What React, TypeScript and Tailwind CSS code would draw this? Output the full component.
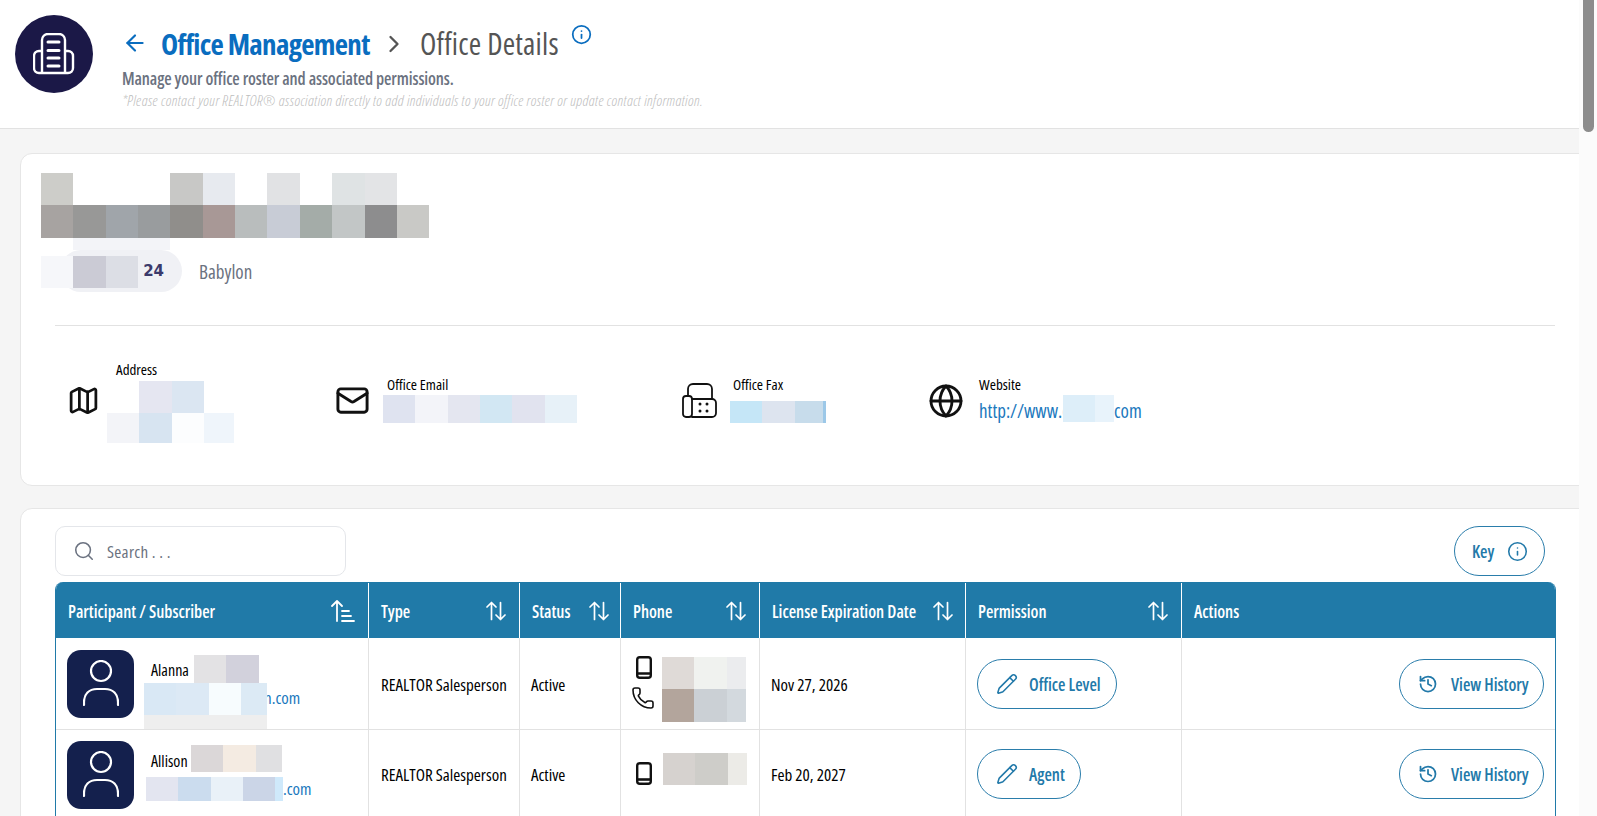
import { ArrowLeft, ChevronRight, Globe, History, Info, Mail, Map as MapIcon, Pencil, Phone, Search } from 'lucide-react';

function Cells({ cells, className }: { cells: string[]; className: string }) {
  return (
    <div className={`flex ${className}`}>
      {cells.map((c, i) => (
        <div key={i} className={c} />
      ))}
    </div>
  );
}

function BuildingIcon() {
  return (
    <svg width="42" height="42" viewBox="0 0 42 42" fill="none" stroke="white" strokeWidth="2.4" strokeLinejoin="round">
      <path d="M9 40V7a6 6 0 0 1 6-6h11a6 6 0 0 1 6 6v33" />
      <path d="M9 18H6a5 5 0 0 0-5 5v12a5 5 0 0 0 5 5h29a5 5 0 0 0 5-5V23a5 5 0 0 0-5-5h-3" />
      <path d="M15 9h11M15 17.5h11M15 25h11M15 33h11" strokeWidth="3" strokeLinecap="round" />
    </svg>
  );
}

function FaxIcon() {
  return (
    <svg width="35" height="35" viewBox="0 0 35 35" fill="none" stroke="#111" strokeWidth="1.8" strokeLinecap="round" strokeLinejoin="round" className="mt-[-4px] shrink-0">
      <rect x="1" y="13" width="9" height="21" rx="3" />
      <path d="M10 16h20a4 4 0 0 1 4 4v10a4 4 0 0 1-4 4H10" />
      <path d="M6 13V6a5 5 0 0 1 5-5h14a5 5 0 0 1 5 5v10" />
      <g fill="#111" stroke="none">
        <circle cx="18" cy="21" r="1.5" />
        <circle cx="25" cy="21" r="1.5" />
        <circle cx="18" cy="28" r="1.5" />
        <circle cx="25" cy="28" r="1.5" />
      </g>
    </svg>
  );
}

function MobileIcon() {
  return (
    <svg width="16" height="23" viewBox="0 0 16 23" fill="none" className="shrink-0">
      <rect x="1.2" y="1.2" width="13.6" height="20.6" rx="2.6" stroke="#111" strokeWidth="2.4" />
      <path d="M1.5 17.5h13" stroke="#111" strokeWidth="2.6" />
      <path d="M6.5 19.6h3" stroke="white" strokeWidth="1" />
    </svg>
  );
}

function SortBoth() {
  return (
    <svg width="20" height="20" viewBox="0 0 20 20" fill="none" stroke="white" strokeWidth="1.7" strokeLinecap="round" strokeLinejoin="round">
      <path d="M5.5 18.5V1.5M1 6l4.5-4.5L10 6" />
      <path d="M14.5 1.5v17M10 14l4.5 4.5L19 14" />
    </svg>
  );
}

function SortAsc() {
  return (
    <svg width="24" height="22" viewBox="0 0 24 22" fill="none" stroke="white" strokeWidth="1.8" strokeLinecap="round" strokeLinejoin="round">
      <path d="M6 21V1M1 6l5-5 5 5" />
      <path d="M11 11h7M11 16h9M11 21h12" />
    </svg>
  );
}

function PersonIcon() {
  return (
    <svg width="36" height="48" viewBox="0 0 36 48" fill="none" stroke="white" strokeWidth="2.2" strokeLinecap="round">
      <circle cx="18" cy="11" r="10" />
      <path d="M1 45v-3c0-8 5-13 13-13h8c8 0 13 5 13 13v3" />
    </svg>
  );
}

function Avatar() {
  return (
    <div className="w-[67px] h-[68px] rounded-[14px] bg-[#14204d] flex items-center justify-center shrink-0">
      <PersonIcon />
    </div>
  );
}

function HeadCell({ label, sort, border = true, className = '' }: { label: string; sort?: 'asc' | 'both'; border?: boolean; className?: string }) {
  return (
    <div className={`flex items-center justify-between pl-[12px] text-white text-[17px] font-semibold ${border ? 'border-r border-white' : ''} ${className}`}>
      <span className="whitespace-nowrap pt-[2px]">{label}</span>
      {sort === 'asc' ? <SortAsc /> : sort === 'both' ? <SortBoth /> : null}
    </div>
  );
}

function PillButton({ icon, label, className }: { icon: React.ReactNode; label: string; className: string }) {
  return (
    <button className={`flex items-center h-[50px] rounded-full border border-[#2a7dab] bg-white text-[#2279a9] text-[17px] font-semibold ${className}`}>
      {icon}
      <span className="whitespace-nowrap pt-[2px]">{label}</span>
    </button>
  );
}

function Cell({ children, className = '' }: { children: React.ReactNode; className?: string }) {
  return <div className={`border-r border-[#e2e2e2] ${className}`}>{children}</div>;
}

export default function App() {
  return (
    <div className="flex h-[816px] overflow-hidden bg-white font-['Open_Sans',sans-serif] [font-stretch:75%] text-black">
      <main className="flex-1 min-w-0 overflow-hidden bg-[#f5f5f5]">
        <header className="h-[129px] bg-white border-b border-[#e2e2e2] flex pl-[15px] pt-[15px]">
          <div className="w-[78px] h-[78px] rounded-full bg-[#1b1847] flex items-center justify-center shrink-0">
            <BuildingIcon />
          </div>
          <div className="ml-[29px] pt-[9px]">
            <div className="flex items-start h-[40px]">
              <ArrowLeft className="mt-[6px] text-[#0a6dbf] shrink-0" size={26} strokeWidth={2} />
              <span className="ml-[13px] w-[209px] text-[29px] leading-[40px] font-bold tracking-[-0.7px] text-[#0a6dbf] whitespace-nowrap">Office Management</span>
              <ChevronRight className="ml-[10px] mt-[6px] text-[#555] shrink-0" size={28} strokeWidth={2} />
              <span className="ml-[12px] text-[30px] leading-[40px] tracking-[0.2px] text-[#555] whitespace-nowrap">Office Details</span>
              <Info className="ml-[12px] text-[#0a6dbf] shrink-0" size={21} strokeWidth={2} />
            </div>
            <p className="mt-[3px] text-[17px] leading-[24px] font-semibold tracking-[-0.1px] text-[#6b7280] whitespace-nowrap">Manage your office roster and associated permissions.</p>
            <p className="mt-[-2px] text-[15px] leading-[22px] font-light italic tracking-[0.35px] text-[#bdbdbd] whitespace-nowrap">*Please contact your REALTOR® association directly to add individuals to your office roster or update contact information.</p>
          </div>
        </header>

        <div className="pl-[20px] pt-[24px]">
          <section className="h-[333px] mr-[-12px] bg-white rounded-[12px] border border-[#e6e6e6] pt-[19px] pl-[20px] pr-[35px]">
            <Cells
              className="h-[32px]"
              cells={['w-[32px] bg-[#cdcdc9]', 'w-[33px]', 'w-[32px]', 'w-[32px]', 'w-[33px] bg-[#c8c8c6]', 'w-[32px] bg-[#e7eaef]', 'w-[32px]', 'w-[33px] bg-[#e1e2e4]', 'w-[32px]', 'w-[33px] bg-[#dfe3e4]', 'w-[32px] bg-[#e3e4e6]']}
            />
            <Cells
              className="h-[33px]"
              cells={['w-[32px] bg-[#a7a3a1]', 'w-[33px] bg-[#989897]', 'w-[32px] bg-[#a0a5aa]', 'w-[32px] bg-[#999c9e]', 'w-[33px] bg-[#908e8b]', 'w-[32px] bg-[#a89896]', 'w-[32px] bg-[#b9bdbd]', 'w-[33px] bg-[#c8ccd6]', 'w-[32px] bg-[#a4aca8]', 'w-[33px] bg-[#c2c6c6]', 'w-[32px] bg-[#8d8d8e]', 'w-[32px] bg-[#c9c9c6]']}
            />
            <div className="flex items-center h-[42px] mt-[12px]">
              <div className="relative w-[122px] h-[42px] ml-[19px] rounded-full bg-[#f0f1f5] flex items-center justify-end pr-[18px] text-[15px] font-bold font-['DejaVu_Sans',sans-serif] [font-stretch:100%] text-[#3b3a6b]">
                24
                <div className="absolute left-[13px] top-[-12px] w-[97px] h-[12px] bg-[#f3f4f8]" />
                <Cells
                  className="absolute left-[-19px] top-[6px] h-[32px]"
                  cells={['w-[32px] bg-[#f6f7fa]', 'w-[33px] bg-[#cbcbd5]', 'w-[32px] bg-[#dcdee5]']}
                />
              </div>
              <span className="ml-[17px] pt-[2px] text-[19px] font-medium text-[#6b7280]">Babylon</span>
            </div>
            <div className="h-px bg-[#e2e2e2] ml-[14px] mt-[33px]" />
            <div className="flex items-center ml-[28px] mt-[34px] h-[85px]">
              <div className="flex items-center w-[268px]">
                <MapIcon className="w-[33px] h-[33px] mt-[-4px] mr-[7px] ml-[-2px] shrink-0 text-[#111]" strokeWidth={2} />
                <div>
                  <div className="ml-[9px] text-[15px] leading-[12px] mb-[6px]">Address</div>
                  <Cells className="h-[32px]" cells={['w-[32px]', 'w-[33px] bg-[#e5e6f1]', 'w-[32px] bg-[#dbe6f2]']} />
                  <Cells className="h-[30px]" cells={['w-[32px] bg-[#f3f4f8]', 'w-[33px] bg-[#d7e4f1]', 'w-[32px] bg-[#fcfdfe]', 'w-[30px] bg-[#eff5fb]']} />
                </div>
              </div>
              <div className="flex items-center w-[345px]">
                <Mail className="w-[35px] h-[35px] mt-[-4px] mr-[13px] ml-[-2px] shrink-0 text-[#111]" strokeWidth={2} />
                <div className="mt-[-6px]">
                  <div className="ml-[4px] text-[15px] leading-[14px] mb-[4px]">Office Email</div>
                  <Cells className="h-[28px]" cells={['w-[32px] bg-[#dfe3f0]', 'w-[33px] bg-[#f3f4f9]', 'w-[32px] bg-[#e4e6f0]', 'w-[32px] bg-[#d2e7f3]', 'w-[33px] bg-[#e1e3ef]', 'w-[32px] bg-[#e7f1f8]']} />
                </div>
              </div>
              <div className="flex items-center w-[248px]">
                <FaxIcon />
                <div className="ml-[13px] mt-[-6px]">
                  <div className="ml-[3px] text-[15px] leading-[14px] mb-[10px]">Office Fax</div>
                  <Cells className="h-[22px]" cells={['w-[32px] bg-[#c5e6f7]', 'w-[33px] bg-[#dde4ef]', 'w-[28px] bg-[#c7dceb]', 'w-[3px] bg-[#9cc8e8]']} />
                </div>
              </div>
              <div className="flex items-center">
                <Globe className="w-[36px] h-[36px] mt-[-4px] ml-[-2px] mr-[15px] shrink-0 text-[#111]" strokeWidth={1.9} />
                <div className="mt-[-6px]">
                  <div className="text-[15px] leading-[14px] mb-[4px]">Website</div>
                  <div className="flex items-center h-[27px] text-[19px] text-[#1a78bd] whitespace-nowrap">
                    <span className="w-[84px] pt-[6px]">http://www.c</span>
                    <Cells className="relative h-[27px]" cells={['w-[32px] bg-[#ddeef9]', 'w-[19px] bg-[#e8f3fb]']} />
                    <span className="pt-[6px]">com</span>
                  </div>
                </div>
              </div>
            </div>
          </section>

          <section className="mt-[22px] mr-[-12px] h-[330px] bg-white rounded-t-[12px] border border-[#e6e6e6] pt-[17px] pl-[34px] pr-[35px]">
            <div className="flex items-center justify-between h-[50px] w-[1490px]">
              <div className="flex items-center w-[291px] h-[50px] rounded-[10px] border border-[#e4e6ea] pl-[17px]">
                <Search className="text-[#6b7280]" size={22} strokeWidth={1.7} />
                <span className="ml-[12px] pt-[2px] text-[17px] text-[#6b7280] tracking-[0.3px]">Search . . .</span>
              </div>
              <PillButton className="w-[91px] pl-[17px] flex-row-reverse justify-end" icon={<Info className="ml-[13px] text-[#2279a9]" size={21} strokeWidth={1.8} />} label="Key" />
            </div>
            <div className="mt-[6px] w-[1501px] rounded-t-[8px] border-x border-[#207aa8] overflow-hidden">
              <div className="grid grid-cols-[313px_151px_101px_139px_206px_216px_1fr] h-[56px] bg-[#207aa8] pt-[1px]">
                <HeadCell label="Participant / Subscriber" sort="asc" className="pr-[13px]" />
                <HeadCell label="Type" sort="both" className="pr-[13px]" />
                <HeadCell label="Status" sort="both" className="pr-[11px]" />
                <HeadCell label="Phone" sort="both" className="pr-[13px]" />
                <HeadCell label="License Expiration Date" sort="both" className="pr-[12px]" />
                <HeadCell label="Permission" sort="both" className="pr-[13px]" />
                <HeadCell label="Actions" border={false} />
              </div>

              <div className="grid grid-cols-[313px_151px_101px_139px_206px_216px_1fr] h-[92px] border-b border-[#e2e2e2] text-[17px]">
                <Cell className="flex pl-[11px] pt-[12px]">
                  <Avatar />
                  <div className="relative flex-1">
                    <div className="absolute left-[17px] top-[5px] flex items-center h-[28px] text-[16px]">
                      <span className="w-[43px] pt-[2px]">Alanna</span>
                      <Cells className="h-[28px]" cells={['w-[32px] bg-[#e3e2e4]', 'w-[33px] bg-[#d2d1dc]']} />
                    </div>
                    <div className="absolute left-[130px] top-[35px] text-[17px] text-[#1a78bd]">n.com</div>
                    <Cells className="absolute left-[10px] top-[33px] h-[32px]" cells={['w-[32px] bg-[#d9e8f5]', 'w-[33px] bg-[#dce9f5]', 'w-[32px] bg-[#f7fcfe]', 'w-[26px] bg-[#dceaf5]']} />
                    <div className="absolute left-[10px] top-[65px] w-[123px] h-[14px] bg-[#eeeeee]" />
                  </div>
                </Cell>
                <Cell className="flex items-center pl-[12px] pt-[2px] whitespace-nowrap">REALTOR Salesperson</Cell>
                <Cell className="flex items-center pl-[11px] pt-[2px]">Active</Cell>
                <Cell className="relative flex">
                  <div className="pl-[15px] pt-[18px]">
                    <MobileIcon />
                    <Phone className="w-[24px] h-[24px] mt-[7px] ml-[-5px] text-[#111]" strokeWidth={1.6} />
                  </div>
                  <div className="pl-[7px] pt-[19px]">
                    <Cells className="h-[32px]" cells={['w-[32px] bg-[#dfdad7]', 'w-[33px] bg-[#f0f2ef]', 'w-[19px] bg-[#ebecee]']} />
                    <Cells className="h-[33px]" cells={['w-[32px] bg-[#b3a59c]', 'w-[33px] bg-[#cbd0d5]', 'w-[19px] bg-[#d3d9de]']} />
                  </div>
                </Cell>
                <Cell className="flex items-center pl-[11px] pt-[2px]">Nov 27, 2026</Cell>
                <Cell className="flex items-center pl-[11px]">
                  <PillButton className="w-[140px] pl-[18px]" icon={<Pencil className="mr-[11px] text-[#2279a9]" size={22} strokeWidth={1.7} />} label="Office Level" />
                </Cell>
                <div className="flex items-center justify-end pr-[11px]">
                  <PillButton className="w-[145px] pl-[18px]" icon={<History className="mr-[13px] text-[#2279a9]" size={20} strokeWidth={2.1} />} label="View History" />
                </div>
              </div>

              <div className="grid grid-cols-[313px_151px_101px_139px_206px_216px_1fr] h-[88px] text-[17px]">
                <Cell className="flex pl-[11px] pt-[11px]">
                  <Avatar />
                  <div className="relative flex-1">
                    <div className="absolute left-[17px] top-[4px] flex items-center h-[27px] text-[16px]">
                      <span className="w-[40px] pt-[4px]">Allison</span>
                      <Cells className="h-[27px]" cells={['w-[32px] bg-[#dbd7d8]', 'w-[33px] bg-[#f4ebe2]', 'w-[26px] bg-[#e0e0e2]']} />
                    </div>
                    <Cells className="absolute left-[12px] top-[36px] h-[24px]" cells={['w-[32px] bg-[#e3e5f0]', 'w-[33px] bg-[#cbdcee]', 'w-[32px] bg-[#e9f1f8]', 'w-[32px] bg-[#cbd5e7]', 'w-[8px] bg-[#cfe9fb]']} />
                    <div className="absolute left-[149px] top-[35px] text-[17px] text-[#1a78bd]">.com</div>
                  </div>
                </Cell>
                <Cell className="flex items-center pl-[12px] pt-[2px] whitespace-nowrap">REALTOR Salesperson</Cell>
                <Cell className="flex items-center pl-[11px] pt-[2px]">Active</Cell>
                <Cell className="flex items-center">
                  <div className="ml-[15px] mb-[2px]"><MobileIcon /></div>
                  <Cells className="ml-[11px] mb-[10px] h-[32px]" cells={['w-[32px] bg-[#d6d2cf]', 'w-[33px] bg-[#cecdc9]', 'w-[19px] bg-[#ecebe7]']} />
                </Cell>
                <Cell className="flex items-center pl-[11px] pt-[2px]">Feb 20, 2027</Cell>
                <Cell className="flex items-center pl-[11px]">
                  <PillButton className="w-[104px] pl-[18px]" icon={<Pencil className="mr-[11px] text-[#2279a9]" size={22} strokeWidth={1.7} />} label="Agent" />
                </Cell>
                <div className="flex items-center justify-end pr-[11px]">
                  <PillButton className="w-[145px] pl-[18px]" icon={<History className="mr-[13px] text-[#2279a9]" size={20} strokeWidth={2.1} />} label="View History" />
                </div>
              </div>
            </div>
          </section>
        </div>
      </main>
      <aside className="w-[18px] shrink-0 bg-[#fbfbfb] pl-[4px]">
        <div className="w-[11px] h-[132px] rounded-b-full bg-[#8c8c8c]" />
      </aside>
    </div>
  );
}
